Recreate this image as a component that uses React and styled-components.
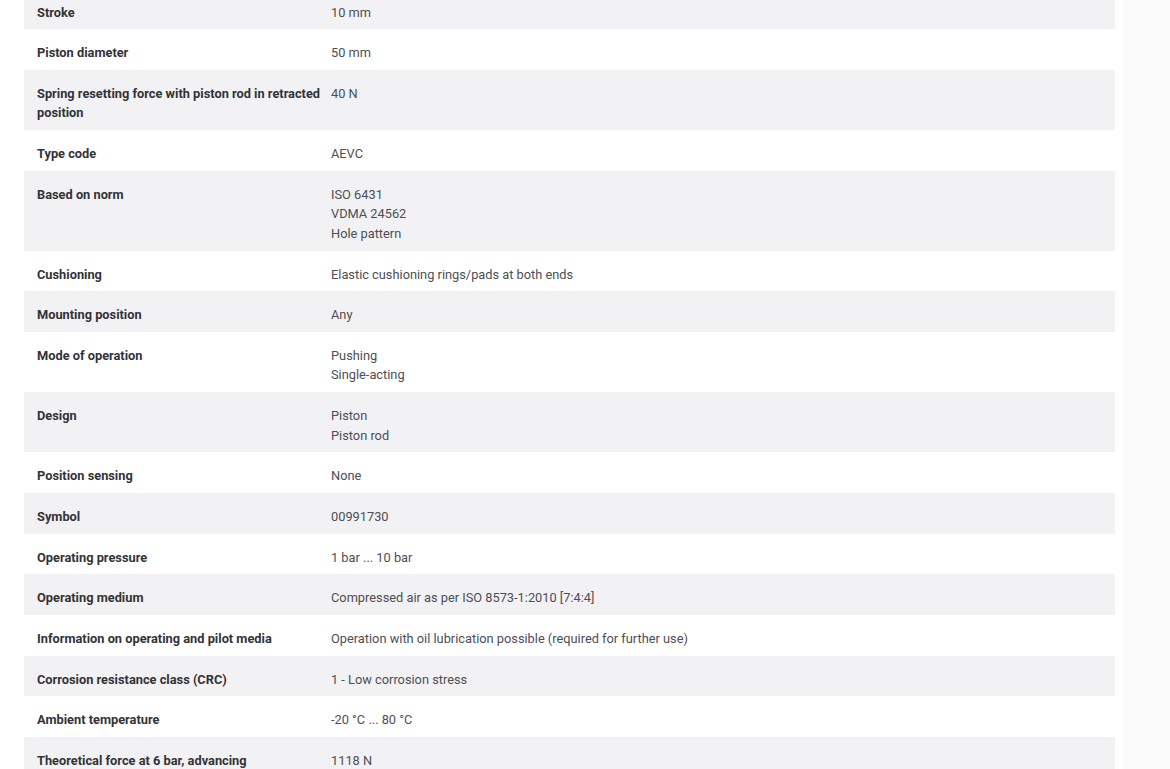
import React from "react";
import styled, { createGlobalStyle } from "styled-components";

const Global = createGlobalStyle`
  html, body { margin: 0; padding: 0; background: #ffffff; }
  body { overflow: hidden; }
`;

const Page = styled.div`
  display: grid;
  grid-template-columns: 1fr 47px;
  width: 1170px;
  height: 769px;
  overflow: hidden;
`;

const Main = styled.div`
  padding: 0 8px 0 24px;
`;

const Gutter = styled.div`
  background: #fbfbfc;
`;

const Table = styled.div`
  margin-top: -11.4px;
  width: 1091px;
  display: flex;
  flex-direction: column;
  font-family: Roboto, "Noto Sans", sans-serif;
  font-size: 12.8px;
  line-height: 19.5px;
`;

const Row = styled.div`
  display: grid;
  grid-template-columns: 294px 1fr;
  padding: 14px 13px 7.2px 13px;
  background: ${(p) => (p.$shaded ? "#f2f2f4" : "#ffffff")};
`;

const Label = styled.div`
  font-weight: 700;
  color: #333338;
  padding-right: 8px;
`;

const Value = styled.div`
  color: #4e4e55;
  display: flex;
  flex-direction: column;
`;

const rows = [
  ["Stroke", ["10 mm"]],
  ["Piston diameter", ["50 mm"]],
  ["Spring resetting force with piston rod in retracted position", ["40 N"]],
  ["Type code", ["AEVC"]],
  ["Based on norm", ["ISO 6431", "VDMA 24562", "Hole pattern"]],
  ["Cushioning", ["Elastic cushioning rings/pads at both ends"]],
  ["Mounting position", ["Any"]],
  ["Mode of operation", ["Pushing", "Single-acting"]],
  ["Design", ["Piston", "Piston rod"]],
  ["Position sensing", ["None"]],
  ["Symbol", ["00991730"]],
  ["Operating pressure", ["1 bar ... 10 bar"]],
  ["Operating medium", ["Compressed air as per ISO 8573-1:2010 [7:4:4]"]],
  ["Information on operating and pilot media", ["Operation with oil lubrication possible (required for further use)"]],
  ["Corrosion resistance class (CRC)", ["1 - Low corrosion stress"]],
  ["Ambient temperature", ["-20 °C ... 80 °C"]],
  ["Theoretical force at 6 bar, advancing", ["1118 N"]],
];

export default function App() {
  return (
    <>
      <Global />
      <Page>
        <Main>
          <Table>
            {rows.map(([label, values], i) => (
              <Row key={label} $shaded={i % 2 === 0}>
                <Label>{label}</Label>
                <Value>
                  {values.map((v) => (
                    <span key={v}>{v}</span>
                  ))}
                </Value>
              </Row>
            ))}
          </Table>
        </Main>
        <Gutter />
      </Page>
    </>
  );
}
